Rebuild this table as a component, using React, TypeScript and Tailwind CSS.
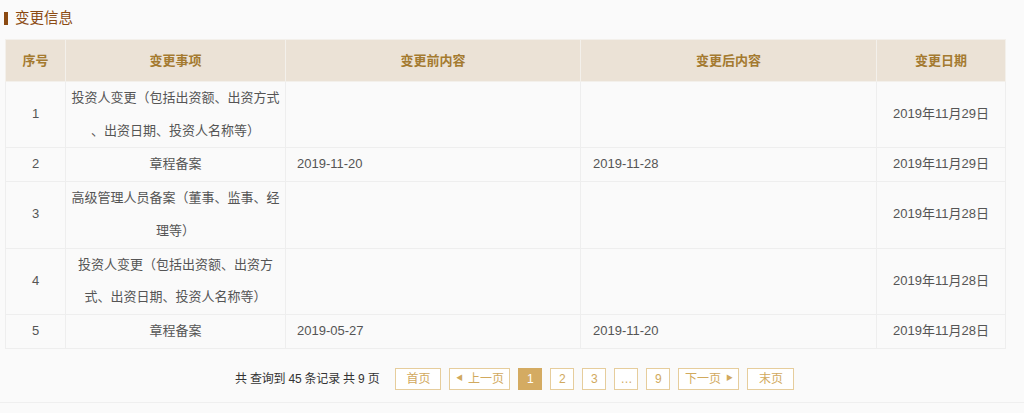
const rows = [
  { no: "1", item: ["投资人变更（包括出资额、出资方式", "、出资日期、投资人名称等）"], before: "", after: "", date: "2019年11月29日" },
  { no: "2", item: ["章程备案"], before: "2019-11-20", after: "2019-11-28", date: "2019年11月29日" },
  { no: "3", item: ["高级管理人员备案（董事、监事、经", "理等）"], before: "", after: "", date: "2019年11月28日" },
  { no: "4", item: ["投资人变更（包括出资额、出资方", "式、出资日期、投资人名称等）"], before: "", after: "", date: "2019年11月28日" },
  { no: "5", item: ["章程备案"], before: "2019-05-27", after: "2019-11-20", date: "2019年11月28日" },
];

const font = { fontFamily: '"Liberation Sans", "Noto Sans CJK SC", sans-serif' };

const PageBtn = ({ children, active, w }: { children: React.ReactNode; active?: boolean; w: string }) => (
  <span
    className={`flex h-[22px] items-center justify-center border text-[12px] ${w} ${
      active ? "border-[#d4ab62] bg-[#d4ab62] text-white" : "border-[#e6cd9c] bg-white text-[#d1a95e]"
    }`}
  >
    {children}
  </span>
);

export default function App() {
  return (
    <div className="h-[413px] w-[1024px] bg-[#fafafa]" style={font}>
      <div className="flex h-[403px] flex-col border-b border-[#efefef] px-[5px]">
        <div className="mt-[11px] flex items-center gap-[7px] -ml-px">
          <span className="h-[13px] w-[4px] shrink-0 bg-[#8b4a12]" />
          <span className="text-[14.5px] leading-[15px] text-[#8b4a12]">变更信息</span>
        </div>

        <table className="mt-[13px] w-[1000px] table-fixed border-collapse text-[13px] text-[#555]">
          <colgroup>
            <col className="w-[60px]" />
            <col className="w-[220px]" />
            <col className="w-[295px]" />
            <col className="w-[296px]" />
            <col className="w-[129px]" />
          </colgroup>
          <thead>
            <tr className="h-[42px] bg-[#ebe2d6] font-bold text-[#a47a30]">
              <th className="border border-[#f3f0eb]">序号</th>
              <th className="border border-[#f3f0eb]">变更事项</th>
              <th className="border border-[#f3f0eb]">变更前内容</th>
              <th className="border border-[#f3f0eb]">变更后内容</th>
              <th className="border border-[#f3f0eb]">变更日期</th>
            </tr>
          </thead>
          <tbody>
            {rows.map((r) => (
              <tr key={r.no} className="leading-[32.7px]">
                <td className="border border-[#eeeeee] text-center">{r.no}</td>
                <td className="border border-[#eeeeee] px-[5px] text-center">
                  {r.item.map((l, i) => (
                    <div key={i} className="whitespace-nowrap">{l}</div>
                  ))}
                </td>
                <td className="border border-[#eeeeee] px-[11px]">{r.before}</td>
                <td className="border border-[#eeeeee] px-[12px]">{r.after}</td>
                <td className="border border-[#eeeeee] text-center">{r.date}</td>
              </tr>
            ))}
          </tbody>
        </table>

        <div className="mt-[19px] flex items-center pl-[230px]">
          <span className="mr-[16px] text-[12px] tracking-[-0.2px] text-[#333]">共 查询到 45 条记录 共 9 页</span>
          <div className="flex gap-[8px]">
            <PageBtn w="w-[46px]">首页</PageBtn>
            <PageBtn w="w-[61px]">
              <span className="mr-[5px] text-[7px]">◀</span>上一页
            </PageBtn>
            <PageBtn w="w-[24px]" active>1</PageBtn>
            <PageBtn w="w-[24px]">2</PageBtn>
            <PageBtn w="w-[24px]">3</PageBtn>
            <PageBtn w="w-[24px]">…</PageBtn>
            <PageBtn w="w-[24px]">9</PageBtn>
            <PageBtn w="w-[61px]">
              下一页<span className="ml-[5px] text-[7px]">▶</span>
            </PageBtn>
            <PageBtn w="w-[47px]">末页</PageBtn>
          </div>
        </div>
      </div>
    </div>
  );
}
